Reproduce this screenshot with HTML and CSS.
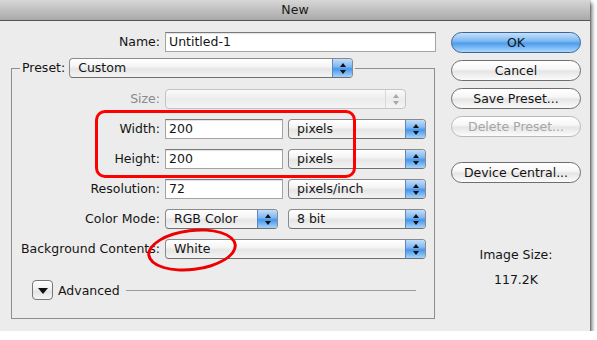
FILE: index.html
```html
<!DOCTYPE html>
<html>
<head>
<meta charset="utf-8">
<title>New</title>
<link rel="stylesheet" href="styles.css">
</head>
<body>
<div class="window">
  <div class="titlebar">New</div>
  <div class="body">
    <div class="main">
      <div class="name-row">
        <span class="lbl name-lbl">Name:</span>
        <div class="field name-field">Untitled-1</div>
      </div>
      <fieldset class="group">
        <legend class="legend">
          <div class="legend-inner">
            <span class="lbl-inline">Preset:</span>
            <div class="popup w-preset"><span class="ptext">Custom</span><span class="arrows"></span></div>
          </div>
        </legend>
        <div class="grid">
          <span class="lbl disabled">Size:</span>
          <div class="ctrl"><div class="popup disabled w-size"><span class="ptext"></span><span class="arrows"></span></div></div>

          <span class="lbl">Width:</span>
          <div class="ctrl"><div class="field w-field">200</div><div class="popup w-unit"><span class="ptext">pixels</span><span class="arrows"></span></div></div>

          <span class="lbl">Height:</span>
          <div class="ctrl"><div class="field w-field">200</div><div class="popup w-unit"><span class="ptext">pixels</span><span class="arrows"></span></div></div>

          <span class="lbl">Resolution:</span>
          <div class="ctrl"><div class="field w-field">72</div><div class="popup w-unit"><span class="ptext">pixels/inch</span><span class="arrows"></span></div></div>

          <span class="lbl">Color Mode:</span>
          <div class="ctrl wide-gap"><div class="popup w-mode"><span class="ptext">RGB Color</span><span class="arrows"></span></div><div class="popup w-unit"><span class="ptext">8 bit</span><span class="arrows"></span></div></div>

          <span class="lbl">Background Contents:</span>
          <div class="ctrl"><div class="popup w-bg"><span class="ptext">White</span><span class="arrows"></span></div></div>
        </div>
        <div class="advanced">
          <div class="disclosure"></div>
          <span class="adv-label">Advanced</span>
          <span class="adv-line"></span>
        </div>
      </fieldset>
      <div class="mark-rect"></div>
      <div class="mark-ellipse"></div>
    </div>
    <div class="side">
      <div class="btn default">OK</div>
      <div class="btn">Cancel</div>
      <div class="btn">Save Preset...</div>
      <div class="btn off">Delete Preset...</div>
      <div class="btn spaced">Device Central...</div>
      <div class="info">
        <div class="info-label">Image Size:</div>
        <div class="info-value">117.2K</div>
      </div>
    </div>
  </div>
</div>
</body>
</html>
```
FILE: styles.css
```css
html, body {
  margin: 0;
  padding: 0;
  background: #ffffff;
}
body {
  font-family: "DejaVu Sans", "Noto Sans", sans-serif;
  font-size: 12.5px;
  color: #141414;
}
.window {
  width: 590px;
  height: 331px;
  background: #ececec;
  box-shadow: 0 0 0 1px rgba(0,0,0,0.12), 2px 3px 4px rgba(0,0,0,0.6);
}
.titlebar {
  height: 20px;
  line-height: 20px;
  text-align: center;
  color: #1a1a1a;
  background: linear-gradient(#d7d7d7, #a9a9a9);
  border-bottom: 1px solid #555555;
}
.body {
  display: flex;
  padding-top: 11px;
}
.main {
  position: relative;
  width: 451px;
  flex: none;
}
.side {
  width: 130px;
  flex: none;
  display: flex;
  flex-direction: column;
}

/* labels */
.lbl {
  text-align: right;
  line-height: 20px;
  white-space: nowrap;
}
.lbl.disabled { color: #8a8a8a; }
.name-row {
  display: flex;
  align-items: center;
  gap: 5px;
  height: 20px;
}
.name-lbl { width: 160px; }

/* text field */
.field {
  box-sizing: border-box;
  height: 20px;
  line-height: 18px;
  padding-left: 3px;
  background: #ffffff;
  border: 1px solid #a4a4a4;
  border-top-color: #7a7a7a;
  box-shadow: inset 0 1px 1px rgba(0,0,0,0.12);
  white-space: nowrap;
}
.name-field { width: 271px; }
.w-field { width: 118px; }

/* group */
.group {
  margin: 6px 0 0 11px;
  width: 424px;
  min-width: 0;
  box-sizing: border-box;
  border: 1px solid #8e8e8e;
  padding: 11px 0 18px 0;
}
.legend {
  margin-left: 8px;
  padding: 0 2px;
}
.legend-inner {
  display: flex;
  align-items: center;
  gap: 4px;
  height: 20px;
}
.lbl-inline { line-height: 20px; }

.grid {
  display: grid;
  grid-template-columns: 148px auto;
  column-gap: 5px;
  row-gap: 10px;
  align-items: center;
}
.ctrl {
  display: flex;
  gap: 5px;
}
.ctrl.wide-gap { gap: 10px; }

/* popup buttons */
.popup {
  box-sizing: border-box;
  height: 20px;
  display: flex;
  border: 1px solid #8a8a8a;
  border-bottom-color: #6f6f6f;
  border-radius: 4px;
  overflow: hidden;
  background: linear-gradient(#ffffff 0%, #f5f5f5 40%, #e6e6e6 55%, #f3f3f3 100%);
}
.ptext {
  flex: 1;
  padding-left: 8px;
  line-height: 18px;
  white-space: nowrap;
}
.arrows {
  width: 19px;
  flex: none;
  display: flex;
  flex-direction: column;
  align-items: center;
  justify-content: center;
  gap: 3px;
  border-left: 1px solid #5f86bd;
  background: linear-gradient(#c2defa 0%, #7fb7f1 42%, #4796ea 55%, #a6d4fb 100%);
}
.arrows::before,
.arrows::after {
  content: "";
  width: 0;
  height: 0;
  border-left: 3px solid transparent;
  border-right: 3px solid transparent;
}
.arrows::before { border-bottom: 4px solid #111; }
.arrows::after { border-top: 4px solid #111; }

.popup.disabled {
  border-color: #c4c4c4;
  background: linear-gradient(#fbfbfb, #ececec 50%, #f4f4f4);
}
.popup.disabled .arrows {
  border-left: 1px solid #dadada;
  background: transparent;
}
.popup.disabled .arrows::before { border-bottom-color: #a8a8a8; }
.popup.disabled .arrows::after { border-top-color: #a8a8a8; }

.w-preset { width: 284px; }
.w-size { width: 241px; }
.w-unit { width: 138px; }
.w-mode { width: 113px; }
.w-bg { width: 261px; }

/* advanced */
.advanced {
  display: flex;
  align-items: center;
  height: 20px;
  margin: 21px 18px 0 20px;
}
.disclosure {
  box-sizing: border-box;
  width: 21px;
  height: 20px;
  border: 1px solid #777777;
  border-radius: 4px;
  background: linear-gradient(#ffffff, #eeeeee 50%, #e2e2e2 55%, #f5f5f5);
  display: flex;
  align-items: center;
  justify-content: center;
}
.disclosure::before {
  content: "";
  width: 0;
  height: 0;
  margin-top: 2px;
  border-left: 5px solid transparent;
  border-right: 5px solid transparent;
  border-top: 6px solid #111;
}
.adv-label {
  margin-left: 5px;
  white-space: nowrap;
}
.adv-line {
  flex: 1;
  height: 1px;
  margin-left: 6px;
  background: #9a9a9a;
}

/* annotations */
.mark-rect {
  position: absolute;
  left: 95px;
  top: 78px;
  width: 261px;
  height: 68px;
  box-sizing: border-box;
  border: 3px solid #ff0000;
  border-radius: 10px;
  pointer-events: none;
}
.mark-ellipse {
  position: absolute;
  left: 147px;
  top: 197px;
  width: 90px;
  height: 42px;
  box-sizing: border-box;
  border: 3px solid #ee0000;
  border-radius: 50%;
  transform: rotate(-7deg);
  pointer-events: none;
}

/* buttons */
.btn {
  box-sizing: border-box;
  height: 21px;
  line-height: 19px;
  text-align: center;
  border: 1px solid #6e6e6e;
  border-radius: 11px;
  margin-bottom: 7px;
  white-space: nowrap;
  background: linear-gradient(#ffffff 0%, #f7f7f7 40%, #e6e6e6 55%, #fbfbfb 100%);
}
.btn.default {
  border-color: #3f6396;
  background: linear-gradient(#c4e0fb 0%, #82bbf2 40%, #4f9eed 55%, #aad7fc 100%);
}
.btn.off {
  color: #a6a6a6;
  border-color: #b9b9b9;
}
.btn.spaced { margin-top: 18px; }

.info {
  margin-top: 57px;
  text-align: center;
}
.info-label { line-height: 16px; }
.info-value { line-height: 16px; margin-top: 9px; }
```
